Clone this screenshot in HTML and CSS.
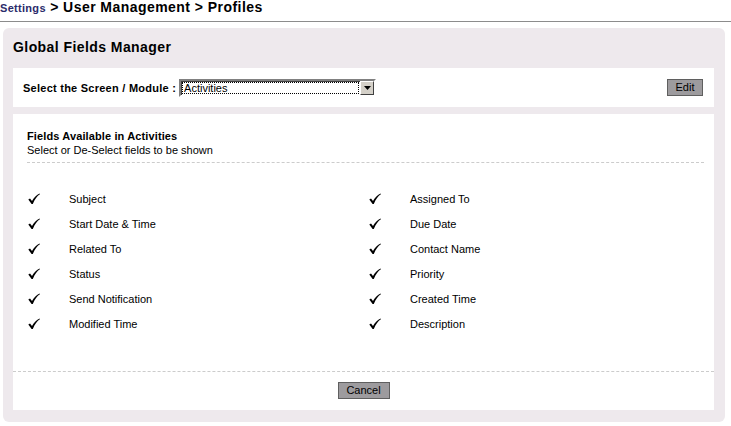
FILE: index.html
```html
<!DOCTYPE html>
<html>
<head>
<meta charset="utf-8">
<link rel="stylesheet" href="styles.css">
</head>
<body>
<div class="crumbs"><span class="crumb-link">Settings</span> &gt; User Management &gt; Profiles</div>
<div class="panel">
  <div class="panel-title">Global Fields Manager</div>
  <div class="box select-row">
    <label class="select-label">Select the Screen / Module :</label>
    <div class="select">
      <span class="select-value">Activities</span>
      <span class="select-btn"><svg width="7" height="4" viewBox="0 0 7 4"><path d="M0 0h7L3.5 4z" fill="#000"/></svg></span>
    </div>
    <span class="spacer"></span>
    <button class="btn">Edit</button>
  </div>
  <div class="box fields">
    <div class="fields-head">
      <div class="fields-title">Fields Available in Activities</div>
      <div class="fields-sub">Select or De-Select fields to be shown</div>
    </div>
    <div class="grid">
      <div class="item"><span class="chk"></span><span>Subject</span></div>
      <div class="item"><span class="chk"></span><span>Assigned To</span></div>
      <div class="item"><span class="chk"></span><span>Start Date &amp; Time</span></div>
      <div class="item"><span class="chk"></span><span>Due Date</span></div>
      <div class="item"><span class="chk"></span><span>Related To</span></div>
      <div class="item"><span class="chk"></span><span>Contact Name</span></div>
      <div class="item"><span class="chk"></span><span>Status</span></div>
      <div class="item"><span class="chk"></span><span>Priority</span></div>
      <div class="item"><span class="chk"></span><span>Send Notification</span></div>
      <div class="item"><span class="chk"></span><span>Created Time</span></div>
      <div class="item"><span class="chk"></span><span>Modified Time</span></div>
      <div class="item"><span class="chk"></span><span>Description</span></div>
    </div>
    <div class="footer">
      <button class="btn">Cancel</button>
    </div>
  </div>
</div>
</body>
</html>
```
FILE: styles.css
```css
* { box-sizing: border-box; }
body {
  margin: 0;
  font-family: "Liberation Sans", Arial, sans-serif;
  font-size: 11px;
  color: #000;
  background: #fff;
}
.crumbs {
  height: 22px;
  border-bottom: 1px solid #8c8c8c;
  padding: 0 0 0 0;
  font-size: 14px;
  font-weight: bold;
  line-height: 15px;
  letter-spacing: 0.45px;
}
.crumb-link {
  font-size: 11px;
  color: #2b2b6b;
  letter-spacing: 0.3px;
}
.panel {
  margin: 6px 6px 4px 3px;
  background: #eee9ed;
  border-radius: 6px;
  padding: 0 11px 12px 10px;
  height: 394px;
  display: flex;
  flex-direction: column;
}
.panel-title {
  height: 40px;
  font-size: 14px;
  font-weight: bold;
  line-height: 16px;
  padding-top: 11px;
  letter-spacing: 0.43px;
}
.box {
  background: #fff;
}
.select-row {
  height: 39px;
  display: flex;
  align-items: center;
  padding: 0 10px 0 10px;
}
.select-label {
  font-weight: bold;
  letter-spacing: 0.25px;
  margin-right: 3px;
}
.select {
  width: 197px;
  height: 18px;
  border: 2px solid;
  border-color: #808080 #fff #fff #808080;
  box-shadow: inset 1px 1px 0 #404040;
  display: flex;
  align-items: stretch;
  background: #fff;
}
.select-value {
  flex: 1;
  margin: 1px;
  outline: 1px dotted #000;
  outline-offset: -1px;
  line-height: 12px;
  padding-left: 2px;
}
.select-btn {
  width: 14px;
  background: #d4d0c8;
  border: 1px solid;
  border-color: #fff #404040 #404040 #fff;
  display: flex;
  align-items: center;
  justify-content: center;
}
.spacer { flex: 1; }
.btn {
  font-family: "Liberation Sans", Arial, sans-serif;
  font-size: 11px;
  background: #9d9b9e;
  border: 1px solid #5f5f5f;
  color: #000;
  height: 17px;
  padding: 0 8px;
  line-height: 15px;
}
.select-row .btn {
  width: 36px;
  padding: 0;
  margin-right: 1px;
}
.fields {
  margin-top: 7px;
  flex: 1;
  display: flex;
  flex-direction: column;
}
.fields-head {
  margin: 0 10px 0 14px;
  padding-top: 15px;
  height: 49px;
  border-bottom: 1px dashed #cccccc;
  line-height: 14px;
}
.fields-title { font-weight: bold; letter-spacing: 0.12px; }
.grid {
  display: grid;
  grid-template-columns: 341px 1fr;
  grid-auto-rows: 25px;
  padding: 23px 0 0 15px;
  height: 209px;
  border-bottom: 1px dashed #cccccc;
}
.item {
  display: flex;
  align-items: center;
}
.chk {
  width: 12px;
  height: 12px;
  margin-right: 29px;
  background: url("data:image/svg+xml;utf8,<svg xmlns='http://www.w3.org/2000/svg' width='12' height='12' viewBox='0 0 12 12'><path d='M0.3 6.6 L2 5.4 L4 8 C6 4.5 8.5 2 11.6 0.6 L11.9 1.3 C9 3.2 7 6 4.8 11 L3.6 11 Z' fill='%23000'/></svg>") no-repeat;
}
.footer {
  flex: 1;
  display: flex;
  justify-content: center;
  align-items: flex-start;
  padding-top: 10px;
}
.footer .btn {
  width: 52px;
  padding: 0;
}
```
